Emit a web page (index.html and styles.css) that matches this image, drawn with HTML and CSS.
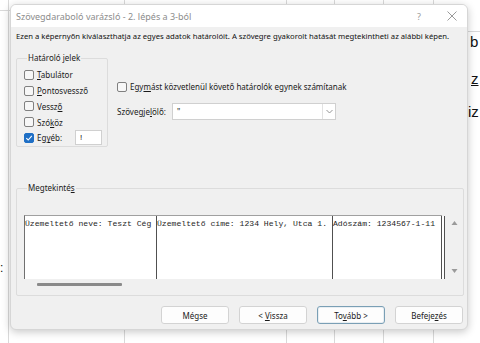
FILE: index.html
```html
<!DOCTYPE html>
<html lang="hu">
<head>
<meta charset="utf-8">
<title>Szövegdaraboló varázsló</title>
<link rel="stylesheet" href="styles.css">
</head>
<body>
<div class="screen">
  <div class="sheet">
    <span class="cell-text ct-b">b</span>
    <span class="cell-text ct-z">z</span>
    <span class="cell-text ct-iz">iz</span>
    <span class="cell-text ct-colon">:</span>
  </div>
  <div class="dialog">
    <div class="titlebar">
      <span class="title">Szövegdaraboló varázsló - 2. lépés a 3-ból</span>
      <span class="help">?</span>
      <span class="close">
        <svg width="10" height="10" viewBox="0 0 10 10"><path d="M0.5 0.5 L9.5 9.5 M9.5 0.5 L0.5 9.5" stroke="#9a9a9a" stroke-width="1" fill="none"/></svg>
      </span>
    </div>
    <div class="body">
      <p class="desc">Ezen a képernyőn kiválaszthatja az egyes adatok határolóit. A szövegre gyakorolt hatását megtekintheti az alábbi képen.</p>
      <div class="top-row">
        <fieldset class="group delims">
          <legend>Határoló jelek</legend>
          <label class="chk"><span class="box"></span><span><u>T</u>abulátor</span></label>
          <label class="chk"><span class="box"></span><span><u>P</u>ontosvessző</span></label>
          <label class="chk"><span class="box"></span><span>Vessz<u>ő</u></span></label>
          <label class="chk"><span class="box"></span><span>Szó<u>k</u>öz</span></label>
          <div class="chk other">
            <span class="box checked"><svg width="8" height="8" viewBox="0 0 8 8"><path d="M1.3 4.2 L3.2 6 L6.8 1.9" stroke="#fff" stroke-width="1.1" fill="none"/></svg></span>
            <span>Eg<u>y</u>éb:</span>
            <span class="other-input">!</span>
          </div>
        </fieldset>
        <div class="options">
          <label class="chk consec"><span class="box"></span><span>Egy<u>m</u>ást közvetlenül követő határolók egynek számítanak</span></label>
          <div class="qualifier">
            <span class="q-label">Szövegje<u>l</u>ölő:</span>
            <div class="combo">
              <span class="combo-val">"</span>
              <span class="combo-arrow"><svg width="7" height="5" viewBox="0 0 7 5"><path d="M0.5 1 L3.5 4 L6.5 1" stroke="#8a8a8a" stroke-width="0.9" fill="none"/></svg></span>
            </div>
          </div>
        </div>
      </div>
      <fieldset class="group preview">
        <legend>Megtekinté<u>s</u></legend>
        <div class="preview-row">
          <div class="data">
            <div class="col c1">Üzemeltető neve: Teszt Cég</div>
            <div class="col c2">Üzemeltető címe: 1234 Hely, Utca 1.</div>
            <div class="col c3">Adószám: 1234567-1-11</div>
          </div>
          <div class="vscroll">
            <svg width="7" height="6" viewBox="0 0 7 6"><path d="M3.5 1 L6.5 5 L0.5 5 Z" fill="#9a9a9a"/></svg>
            <svg width="7" height="6" viewBox="0 0 7 6"><path d="M0.5 1 L6.5 1 L3.5 5 Z" fill="#9a9a9a"/></svg>
          </div>
        </div>
        <div class="hscroll"><div class="thumb"></div></div>
      </fieldset>
      <div class="buttons">
        <button class="btn">Mégse</button>
        <button class="btn">&lt; <u>V</u>issza</button>
        <button class="btn default">To<u>v</u>ább &gt;</button>
        <button class="btn">Befeje<u>z</u>és</button>
      </div>
    </div>
  </div>
</div>
</body>
</html>
```

FILE: styles.css
```css
* { box-sizing: border-box; }
html, body { margin: 0; padding: 0; }
body {
  width: 480px;
  height: 343px;
  overflow: hidden;
  background: #ffffff;
  font-family: "Noto Sans", "Open Sans", sans-serif;
}
.screen {
  position: relative;
  width: 480px;
  height: 343px;
  background:
    linear-gradient(#d9d9d9, #d9d9d9) 0 10px / 12px 1px no-repeat,
    linear-gradient(#d9d9d9, #d9d9d9) 466px 31px / 14px 1px no-repeat,
    linear-gradient(#d9d9d9, #d9d9d9) 8px 0 / 1px 343px no-repeat,
    linear-gradient(#d9d9d9, #d9d9d9) 124px 0 / 1px 343px no-repeat,
    linear-gradient(#d9d9d9, #d9d9d9) 286px 0 / 1px 343px no-repeat,
    linear-gradient(#d9d9d9, #d9d9d9) 334px 0 / 1px 343px no-repeat,
    linear-gradient(#d9d9d9, #d9d9d9) 383px 0 / 1px 343px no-repeat,
    linear-gradient(#d9d9d9, #d9d9d9) 433px 0 / 1px 343px no-repeat,
    #ffffff;
}
.sheet { position: absolute; inset: 0; }
.cell-text {
  position: absolute;
  font-family: "Liberation Sans", sans-serif;
  font-size: 15px;
  color: #111;
  line-height: 1;
}
.ct-b { left: 470px; top: 34px; }
.ct-z { left: 471px; top: 71px; text-decoration: underline; }
.ct-iz { left: 468px; top: 104px; }
.ct-colon { left: 0px; top: 262px; font-size: 12px; }

.dialog {
  position: absolute;
  left: 10px;
  top: 4px;
  width: 458px;
  height: 326px;
  background: #f0f0f0;
  border: 1px solid #d6d6d6;
  border-radius: 6px;
  box-shadow: 0 2px 8px rgba(0,0,0,0.22);
  overflow: hidden;
  display: flex;
  flex-direction: column;
}
.titlebar {
  height: 22px;
  background: #ffffff;
  display: flex;
  align-items: center;
  padding-left: 5px;
  flex: none;
}
.title {
  font-size: 9px;
  color: #8c8c8c;
  flex: 1;
  padding-top: 1px;
}
.help {
  font-size: 9px;
  color: #9a9a9a;
  width: 12px;
  text-align: center;
  margin-right: 22px;
}
.close {
  display: flex;
  margin-right: 10px;
}
.body {
  flex: 1;
  padding: 0 0 0 5px;
  font-size: 8px;
  color: #1a1a1a;
  display: flex;
  flex-direction: column;
}
.desc {
  margin: 4px 0 0 0;
  font-size: 7.7px;
  line-height: 11px;
  white-space: nowrap;
  color: #111;
}
.top-row {
  display: flex;
  margin-top: 11px;
}
.group {
  margin: 0;
  border: 1px solid #dcdcdc;
  border-radius: 2px;
  padding: 0;
  min-width: 0;
}
.group legend {
  font-size: 8px;
  padding: 0 1px;
  margin-left: 3px;
  line-height: 10px;
}
.delims {
  width: 92px;
  height: 94px;
  padding: 4px 0 0 7px;
  display: flex;
  flex-direction: column;
}
.chk {
  display: flex;
  align-items: center;
  height: 15.75px;
  gap: 3px;
  font-size: 8px;
  white-space: nowrap;
}
.box {
  width: 10px;
  height: 10px;
  border: 1px solid #808080;
  border-radius: 2px;
  background: #f7f7f7;
  flex: none;
  display: flex;
  align-items: center;
  justify-content: center;
}
.box.checked {
  background: #1f6fc5;
  border-color: #1f6fc5;
}
.other-input {
  width: 27px;
  height: 15px;
  background: #fff;
  border: 1px solid #d0d0d0;
  margin-left: 10px;
  padding-left: 4px;
  line-height: 13px;
  font-family: "Liberation Sans", sans-serif;
  color: #111;
}
.options {
  margin-left: 9px;
  padding-top: 26px;
}
.qualifier {
  display: flex;
  align-items: center;
  margin-top: 8px;
}
.q-label { width: 55px; }
.combo {
  width: 164px;
  height: 17px;
  background: #fff;
  border: 1px solid #d0d0d0;
  display: flex;
  align-items: center;
  justify-content: space-between;
  padding-left: 4px;
}
.combo-arrow {
  width: 13px;
  height: 15px;
  border-left: 1px solid #e2e2e2;
  display: flex;
  align-items: center;
  justify-content: center;
}
.preview {
  margin-top: 36px;
  width: 448px;
  height: 113px;
  padding: 22px 0 0 7px;
}
.preview-row {
  display: flex;
}
.data {
  display: flex;
  height: 64px;
  background: #fff;
  border-top: 1px solid #a0a0a0;
  border-left: 1px solid #707070;
  font-family: "Liberation Mono", monospace;
  font-size: 8.1px;
  color: #1e1e1e;
  line-height: 11px;
}
.col {
  padding: 2px 0 0 0;
  white-space: nowrap;
  border-right: 1px solid #505050;
}
.c1 { width: 132px; }
.c2 { width: 176px; }
.c3 { width: 109px; box-shadow: 2px 0 0 #fff, 3px 0 0 #505050; }
.vscroll {
  width: 20px;
  display: flex;
  flex-direction: column;
  justify-content: space-between;
  align-items: center;
  padding: 5px 0 5px 5px;
}
.hscroll {
  height: 10px;
  padding: 4px 0 0 13px;
}
.thumb {
  width: 85px;
  height: 3px;
  background: #8a8a8a;
  border-radius: 1px;
}
.buttons {
  display: flex;
  justify-content: flex-end;
  gap: 10px;
  margin-top: 10px;
  padding-right: 4px;
}
.btn {
  width: 68px;
  height: 18px;
  background: #fdfdfd;
  border: 1px solid #d3d3d3;
  border-radius: 3px;
  font-family: "Noto Sans", "Open Sans", sans-serif;
  font-size: 8px;
  color: #1a1a1a;
  padding: 0;
}
.btn.default {
  border: 1px solid #7a9fb5;
  box-shadow: inset 0 0 0 1px #e8eef2;
}
```
